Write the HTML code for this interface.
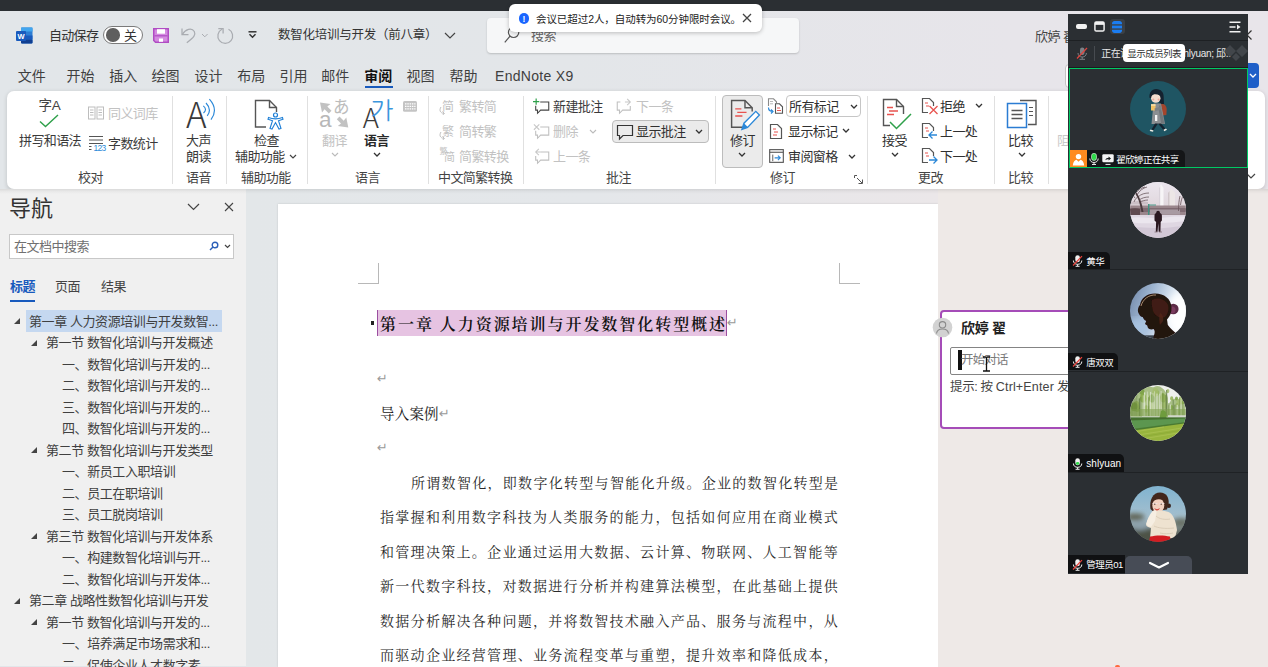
<!DOCTYPE html>
<html lang="zh-CN">
<head>
<meta charset="utf-8">
<title>数智化培训与开发</title>
<style>
*{box-sizing:border-box;margin:0;padding:0}
html,body{width:1268px;height:667px;overflow:hidden}
body{position:relative;background:linear-gradient(90deg,#e2e6e9 0%,#e3e6e9 45%,#e7e5ea 80%,#e8e5ea 100%);font-family:"Liberation Sans","Noto Sans CJK SC",sans-serif;color:#242424;font-size:13px}
.abs{position:absolute}
.t{position:absolute;white-space:nowrap;line-height:1}
.topbar{left:0;top:0;width:1268px;height:10.500px;background:#2b2f33}

/* ribbon */
.ribbon{left:7px;top:91.200px;width:1257.600px;height:97.500px;background:#fff;border-radius:7px;box-shadow:0 1.500px 4px rgba(0,0,0,.16)}
.sep{position:absolute;top:96px;width:1px;height:88px;background:#e0e0e0}
.rl{font-size:13px;color:#3a3a3a;letter-spacing:-0.6px}
.gl{font-size:13px;color:#444;letter-spacing:-0.6px}
.g{color:#c2c2c2 !important}
/* nav */
.nav{left:0;top:189px;width:246px;height:477px;background:#f0f0f0}
.tr{position:absolute;white-space:nowrap;line-height:1;font-size:13px;color:#404040;letter-spacing:-0.42px}
.tri{position:absolute;width:0;height:0;border-left:6px solid transparent;border-bottom:6px solid #444}
/* doc */
.docbg{left:246px;top:189px;width:692px;height:478px;background:linear-gradient(90deg,#e3e7e9 0%,#e4e7ea 50%,#ebe7e9 100%)}
.page{left:278px;top:204px;width:660px;height:463px;background:#fff;box-shadow:0 0 2px rgba(0,0,0,.15)}
.kai{font-family:"Liberation Serif","Noto Serif CJK SC",serif}
.body{position:absolute;white-space:nowrap;line-height:1;font-size:14px;color:#2a2a2a;letter-spacing:1.3px}
.pm{color:#9a9a9a;font-family:"DejaVu Sans",sans-serif}
/* right */
.right{left:938px;top:189px;width:330px;height:478px;background:#eee9e7}
/* video */
.vp{left:1068.300px;top:13.700px;width:179.700px;height:560.500px;background:#2b2f33}
.vl{position:absolute;height:17.500px;background:#101113;border-top-right-radius:5px;left:0}
.vt{position:absolute;white-space:nowrap;line-height:1;font-size:10px;color:#fff}
.av{position:absolute;left:62.200px;width:56px;height:56px;border-radius:50%;overflow:hidden}
</style>
</head>
<body>
<div class="abs topbar"></div>

<!-- TITLE BAR -->
<div id="titlebar">
<svg class="abs" style="left:16px;top:27px" width="17" height="17" viewBox="0 0 17 17">
  <rect x="5" y="0.5" width="11.5" height="16" rx="1.2" fill="#2b7cd3"/>
  <rect x="5" y="0.5" width="11.5" height="4" fill="#41a5ee"/>
  <rect x="5" y="8.5" width="11.5" height="4" fill="#185abd"/>
  <rect x="5" y="12.5" width="11.5" height="4" rx="1" fill="#103f91"/>
  <rect x="0" y="4" width="10" height="10" rx="1" fill="#185abd"/>
  <text x="5" y="11.8" font-size="7.5" font-weight="bold" fill="#fff" text-anchor="middle" font-family="Liberation Sans, sans-serif">W</text>
</svg>
<div class="t" style="left:49px;top:28.700px;font-size:13px;color:#333;letter-spacing:-0.7px">自动保存</div>
<div class="abs" style="left:103px;top:26px;width:39.500px;height:17.500px;border:1px solid #7a7a7a;border-radius:9px;background:#fff"></div>
<div class="abs" style="left:106px;top:28px;width:13.500px;height:13.500px;border-radius:50%;background:#5f5f5f"></div>
<div class="t" style="left:124px;top:28.700px;font-size:13px;color:#333">关</div>
<svg class="abs" style="left:153px;top:28px" width="16" height="15" viewBox="0 0 16 15">
  <path d="M0.750 0.750h14.500v13.500H2.500L0.750 12.500z" fill="#d48be0" stroke="#b04cc3" stroke-width="1.500"/>
  <rect x="4" y="1.200" width="8" height="4.500" fill="#fff"/>
  <rect x="6" y="10.500" width="4" height="3.300" fill="#fff"/>
  <path d="M1.500 7.800h13" stroke="#b04cc3" stroke-width="1.200"/>
</svg>
<svg class="abs" style="left:180px;top:26px" width="60" height="20" viewBox="0 0 60 20" fill="none" stroke="#a9acb1" stroke-width="1.250">
  <path d="M2 2.500v6.200h6.500"/><path d="M2.300 8.500c3-5.500 9.500-7.200 12-3 1.800 3.500-.5 6-7.500 11.200"/>
  <path d="M22 8l2.800 2.800L27.600 8" stroke-width="1"/>
  <path d="M42 3.300a7.400 7.400 0 1 0 6.500 0"/><path d="M38.300 2.600h4.800v4.800"/>
</svg>
<svg class="abs" style="left:247.500px;top:31px" width="9" height="8" viewBox="0 0 9 8" fill="none" stroke="#333" stroke-width="1.500"><path d="M0.500 0.800h8"/><path d="M1.500 3.300l3 3 3-3"/></svg>
<div class="t" style="left:278px;top:28.500px;font-size:12.500px;color:#333;letter-spacing:-0.25px">数智化培训与开发（前八章）</div>
<svg class="abs" style="left:444px;top:32px" width="12" height="8" viewBox="0 0 12 8" fill="none" stroke="#444" stroke-width="1.2"><path d="M1 1l5 5 5-5"/></svg>
<div class="abs" style="left:487px;top:18px;width:312px;height:35px;background:#f6f7f8;border-radius:4px;box-shadow:0 1px 2px rgba(0,0,0,.18)"></div>
<svg class="abs" style="left:504px;top:26px" width="16" height="17" viewBox="0 0 16 17" fill="none" stroke="#555" stroke-width="1.200"><circle cx="9.600" cy="6.300" r="5.200"/><path d="M6 10.200L0.800 16.300"/></svg>
<div class="t" style="left:531px;top:28.700px;font-size:13px;color:#666;letter-spacing:-0.4px">搜索</div>
<div class="t" style="left:1035px;top:29.700px;font-size:13px;color:#444;letter-spacing:-0.5px">欣婷 翟</div><div class="abs" style="left:1065px;top:64px;width:30px;height:24px;background:#fff;border-radius:4px;border:1px solid #c4c4c4"></div>
<!-- toast -->
<div class="abs" style="left:509px;top:3.800px;width:253px;height:28.400px;background:#fff;border-radius:6px;box-shadow:0 1px 4px rgba(0,0,0,.25)"></div>
<div class="abs" style="left:518.500px;top:13.200px;width:10.800px;height:10.800px;border-radius:50%;background:#1a66ff"></div>
<div class="t" style="left:522.600px;top:14.500px;font-size:8.500px;color:#fff;font-weight:bold">!</div>
<div class="t" style="left:536px;top:14px;font-size:10.500px;color:#222;letter-spacing:-0.07px">会议已超过2人，自动转为60分钟限时会议。</div>
<svg class="abs" style="left:742px;top:13px" width="10" height="10" viewBox="0 0 10 10" stroke="#444" stroke-width="1.3"><path d="M1 1l8 8M9 1l-8 8"/></svg>
<!-- far right window buttons -->
<svg class="abs" style="left:1242px;top:30px" width="10" height="10" viewBox="0 0 10 10" stroke="#333" stroke-width="1.200"><path d="M0.500 0.500l9 9M9.500 0.500l-9 9"/></svg>
<div class="abs" style="left:1240px;top:63px;width:19px;height:25px;background:#1f5fc8;border-radius:4px"></div>
<svg class="abs" style="left:1248.500px;top:73px" width="8" height="6" viewBox="0 0 8 6" fill="none" stroke="#fff" stroke-width="1.3"><path d="M1 1l3 3 3-3"/></svg>
</div>

<!-- MENU -->
<div id="menu">
<div class="t" style="left:17.8px;top:69px;font-size:14px;color:#3f3f3f">文件</div>
<div class="t" style="left:66.5px;top:69px;font-size:14px;color:#3f3f3f">开始</div>
<div class="t" style="left:109.2px;top:69px;font-size:14px;color:#3f3f3f">插入</div>
<div class="t" style="left:151.4px;top:69px;font-size:14px;color:#3f3f3f">绘图</div>
<div class="t" style="left:194.4px;top:69px;font-size:14px;color:#3f3f3f">设计</div>
<div class="t" style="left:237.2px;top:69px;font-size:14px;color:#3f3f3f">布局</div>
<div class="t" style="left:279.4px;top:69px;font-size:14px;color:#3f3f3f">引用</div>
<div class="t" style="left:321.3px;top:69px;font-size:14px;color:#3f3f3f">邮件</div>
<div class="t" style="left:364.2px;top:69px;font-size:14px;color:#111;font-weight:bold">审阅</div>
<div class="abs" style="left:365px;top:86px;width:27.500px;height:2px;background:#185abd"></div>
<div class="t" style="left:406.5px;top:69px;font-size:14px;color:#3f3f3f">视图</div>
<div class="t" style="left:449.5px;top:69px;font-size:14px;color:#3f3f3f">帮助</div>
<div class="t" style="left:495px;top:69px;font-size:14px;color:#3f3f3f;letter-spacing:0.3px">EndNote X9</div>
</div>

<!-- RIBBON -->
<div class="abs ribbon"></div>
<div id="ribbon-items">
<div class="sep" style="left:172px"></div>
<div class="sep" style="left:226px"></div>
<div class="sep" style="left:307px"></div>
<div class="sep" style="left:428px"></div>
<div class="sep" style="left:523px"></div>
<div class="sep" style="left:715px"></div>
<div class="sep" style="left:867px"></div>
<div class="sep" style="left:994px"></div>
<div class="sep" style="left:1048px"></div>
<!-- group labels -->
<div class="t gl" style="left:78px;top:171px">校对</div>
<div class="t gl" style="left:186px;top:171px">语音</div>
<div class="t gl" style="left:241px;top:171px">辅助功能</div>
<div class="t gl" style="left:355px;top:171px">语言</div>
<div class="t gl" style="left:438px;top:171px">中文简繁转换</div>
<div class="t gl" style="left:606px;top:171px">批注</div>
<div class="t gl" style="left:770px;top:171px">修订</div>
<div class="t gl" style="left:918px;top:171px">更改</div>
<div class="t gl" style="left:1008px;top:171px">比较</div>

<!-- 校对 -->
<div class="t" style="left:38.500px;top:99px;font-size:13.500px;color:#444;letter-spacing:-0.3px">字A</div>
<svg class="abs" style="left:39px;top:114px" width="20" height="14" viewBox="0 0 20 14" fill="none" stroke="#2ea04a" stroke-width="1.4"><path d="M1 7.5l5.5 5L19 1"/></svg>
<div class="t rl" style="left:19px;top:134px">拼写和语法</div>
<svg class="abs" style="left:88px;top:106px" width="16" height="14" viewBox="0 0 16 14" fill="none" stroke="#bdbdbd" stroke-width="1"><rect x="0.5" y="1" width="6.5" height="12"/><rect x="9" y="1" width="6.5" height="12"/><path d="M2 4h3.5M2 6.5h3.5M2 9h3.5M10.5 4H14M10.5 6.5H14M10.5 9H14"/></svg>
<div class="t rl g" style="left:108px;top:107px">同义词库</div>
<svg class="abs" style="left:88px;top:135px" width="17" height="16" viewBox="0 0 17 16" fill="none" stroke="#555" stroke-width="1"><path d="M1 1.5h14M1 5h14M1 8.5h14M1 11.5h2.5M1 14.5h2.5"/></svg>
<div class="t" style="left:93.500px;top:144px;font-size:8.500px;color:#2b8ad8;letter-spacing:-0.7px">123</div>
<div class="t rl" style="left:108px;top:137px">字数统计</div>

<!-- 语音 -->
<svg class="abs" style="left:184px;top:98px" width="34" height="32" viewBox="0 0 34 32" fill="none">
  <path d="M19.300 7.900Q23.600 11.500 19.500 15M22 5Q28.200 11.500 23.200 17.900M25.400 1.200Q34.600 11.500 27 21.700" stroke="#2b88d8" stroke-width="1.150"/>
</svg>
<div class="t" style="left:186px;top:95px;font-size:35px;font-weight:300;color:#3a3a3a;font-family:'Noto Sans CJK SC','Liberation Sans',sans-serif">A</div>
<div class="t rl" style="left:186px;top:134px">大声</div>
<div class="t rl" style="left:186px;top:150px">朗读</div>

<!-- 辅助功能 -->
<svg class="abs" style="left:253px;top:98px" width="34" height="34" viewBox="0 0 34 34" fill="none">
  <path d="M13 29H2.500V2.500h14l7 7V14" stroke="#555" stroke-width="1.4"/>
  <path d="M16.500 2.500v7h7" stroke="#555" stroke-width="1.4"/>
  <circle cx="22.500" cy="17" r="2" stroke="#1e7fd6" stroke-width="1.2"/>
  <path d="M15.500 19.500c4 1.600 10 1.600 14 0l.5 1.800c-2 .8-3.500 1.200-4.500 1.400l2.500 7.800-2 .6-3.500-6.500-3.500 6.500-2-.6 2.500-7.800c-1-.2-2.500-.6-4.500-1.400z" stroke="#1e7fd6" stroke-width="1.1"/>
</svg>
<div class="t rl" style="left:254px;top:134px">检查</div>
<div class="t rl" style="left:235px;top:150px">辅助功能</div>
<svg class="abs" style="left:289px;top:154px" width="8" height="6" viewBox="0 0 8 6" fill="none" stroke="#444" stroke-width="1.2"><path d="M1 1l3 3 3-3"/></svg>

<!-- 语言 -->
<svg class="abs" style="left:319px;top:98px" width="30" height="30" viewBox="0 0 30 30" fill="#c2c2c2">
  <path d="M1 4.500l10.500 1.500-3.200 2.600 4.200 4.200-2.700 2.700-4.200-4.200L3 14.500z"/>
  <path d="M29.300 29.500l-10.500-1.500 3.200-2.600-4.200-4.200 2.700-2.700 4.200 4.200L27.300 19.500z"/>
</svg>
<div class="t" style="left:333px;top:99px;font-size:16.500px;color:#bcbcbc;font-family:'Liberation Sans','Noto Sans CJK JP',sans-serif">あ</div>
<div class="t" style="left:319px;top:109.300px;font-size:22.500px;color:#b8b8b8">a</div>
<div class="t rl g" style="left:322px;top:134px">翻译</div>
<svg class="abs" style="left:331px;top:152px" width="8" height="6" viewBox="0 0 8 6" fill="none" stroke="#bbb" stroke-width="1.1"><path d="M1 1l3 3 3-3"/></svg>
<div class="t" style="left:362.700px;top:102.700px;font-size:27.500px;font-weight:300;color:#3a3a3a;font-family:'Noto Sans CJK SC','Liberation Sans',sans-serif">A</div>
<div class="t" style="left:370.500px;top:98.500px;font-size:24px;color:#3a96dd;font-family:'Liberation Sans','NanumGothic','Noto Sans CJK KR',sans-serif">가</div>
<div class="t rl" style="left:364px;top:134px;font-weight:bold;color:#2a2a2a">语言</div>
<svg class="abs" style="left:373px;top:152px" width="8" height="6" viewBox="0 0 8 6" fill="none" stroke="#333" stroke-width="1.3"><path d="M1 1l3 3 3-3"/></svg>
<svg class="abs" style="left:403px;top:101.300px" width="14" height="11" viewBox="0 0 14 11"><rect x="0" y="0" width="14" height="10.700" rx="1.500" fill="#c4c4c4"/><path d="M2 2.800h10.500M2 5.300h10.500M2 7.900h10.500" stroke="#fff" stroke-width="1.200" stroke-dasharray="1.500 0.800"/></svg>

<!-- 中文简繁转换 -->
<div class="t g" style="left:442px;top:100.500px;font-size:12px">简</div>
<div class="t rl g" style="left:459px;top:100px">繁转简</div>
<div class="t g" style="left:442px;top:125.500px;font-size:12px">繁</div>
<div class="t rl g" style="left:459px;top:125px">简转繁</div>
<div class="t g" style="left:444px;top:152px;font-size:11px">简</div>
<div class="t g" style="left:439.500px;top:147.500px;font-size:8px">繁</div>
<div class="t rl g" style="left:459px;top:150px">简繁转换</div>
<svg class="abs" style="left:438.500px;top:107px" width="8" height="8" viewBox="0 0 8 8" fill="none" stroke="#c0c0c0" stroke-width="1"><path d="M2 0c-2 3-1 6 3 6.500M3.500 4.500l2 2-2 1.500"/></svg>
<svg class="abs" style="left:438.500px;top:132px" width="8" height="8" viewBox="0 0 8 8" fill="none" stroke="#c0c0c0" stroke-width="1"><path d="M2 0c-2 3-1 6 3 6.500M3.500 4.500l2 2-2 1.500"/></svg>

<!-- 批注 -->
<svg class="abs" style="left:533px;top:98px" width="18" height="18" viewBox="0 0 20 20" fill="none"><path d="M8 4.500h9.500v9H8.500l-3.500 3.500v-3.500H3V8.500" stroke="#444" stroke-width="1.2"/><path d="M3.500 0.500v7M0 4h7" stroke="#2ea04a" stroke-width="1.3"/></svg>
<div class="t rl" style="left:553px;top:100px">新建批注</div>
<svg class="abs" style="left:533px;top:123px" width="18" height="18" viewBox="0 0 20 20" fill="none"><path d="M8 4.500h9.500v9H8.500l-3.500 3.500v-3.500H3V8.500" stroke="#c0c0c0" stroke-width="1.2"/><path d="M1 1.500l6 6M7 1.500l-6 6" stroke="#c8c8c8" stroke-width="1.2"/></svg>
<div class="t rl g" style="left:553px;top:125px">删除</div>
<svg class="abs" style="left:589px;top:129px" width="8" height="6" viewBox="0 0 8 6" fill="none" stroke="#bbb" stroke-width="1.1"><path d="M1 1l3 3 3-3"/></svg>
<svg class="abs" style="left:533px;top:148px" width="18" height="18" viewBox="0 0 20 20" fill="none"><path d="M8 4.500h9.500v9H8.500l-3.500 3.500v-3.500H3V9" stroke="#c0c0c0" stroke-width="1.2"/><path d="M6.500 1L3 4.500 6.500 8M3 4.500h5" stroke="#c8c8c8" stroke-width="1.2"/></svg>
<div class="t rl g" style="left:553px;top:150px">上一条</div>
<svg class="abs" style="left:615px;top:98px" width="18" height="18" viewBox="0 0 20 20" fill="none"><path d="M6 4.500H2.500v9H5v3.500l3.500-3.500H17V9" stroke="#c0c0c0" stroke-width="1.2"/><path d="M13.500 1L17 4.500 13.500 8M17 4.500h-6" stroke="#c8c8c8" stroke-width="1.2"/></svg>
<div class="t rl g" style="left:636px;top:100px">下一条</div>
<div class="abs" style="left:612px;top:120px;width:97px;height:23px;background:#ebebeb;border:1px solid #bcbcbc;border-radius:4px"></div>
<svg class="abs" style="left:616px;top:123px" width="18" height="18" viewBox="0 0 18 18" fill="none"><path d="M1.500 2.500h15v10H7l-3.500 3.500v-3.500H1.500z" stroke="#333" stroke-width="1.200"/></svg>
<div class="t rl" style="left:636px;top:125px;color:#303030">显示批注</div>
<svg class="abs" style="left:695px;top:129px" width="8" height="6" viewBox="0 0 8 6" fill="none" stroke="#333" stroke-width="1.3"><path d="M1 1l3 3 3-3"/></svg>

<!-- 修订 -->
<div class="abs" style="left:722px;top:95px;width:41px;height:73px;background:#ebebeb;border:1px solid #bcbcbc;border-radius:4px"></div>
<svg class="abs" style="left:729px;top:97.500px" width="33" height="35" viewBox="0 0 32 34" fill="none">
  <path d="M17 28.500H2.500V2.500h13l7 7V13" stroke="#555" stroke-width="1.4"/><path d="M15.500 2.500v7h7" stroke="#555" stroke-width="1.4"/>
  <path d="M6 10.500h6M8 14h9M6 17.500h7" stroke="#e8534f" stroke-width="1.300"/>
  <path d="M12.500 30.500l2-6L26 13l3.500 3.500L18 28.500z" fill="#fff" stroke="#2b88d8" stroke-width="1.300"/><path d="M12.500 30.500l2-6 4 4z" fill="#2b88d8"/>
</svg>
<div class="t rl" style="left:730px;top:134px;color:#303030">修订</div>
<svg class="abs" style="left:738px;top:152px" width="8" height="6" viewBox="0 0 8 6" fill="none" stroke="#333" stroke-width="1.3"><path d="M1 1l3 3 3-3"/></svg>
<svg class="abs" style="left:767px;top:98px" width="17" height="17" viewBox="0 0 17 17" fill="none">
  <path d="M1.500 8V0.800h5l3 3V5" stroke="#8a8a8a" stroke-width="1.100"/><path d="M3 3.500h3M3 5.800h3" stroke="#b0b0b0" stroke-width="0.900"/>
  <path d="M8.500 15.300v-9.500h4l3 3v6.500z" stroke="#555" stroke-width="1.100" fill="#fff"/><path d="M10 10h3M10 12.500h4" stroke="#e8534f" stroke-width="1"/>
  <path d="M1.500 9.500c0 3 1.500 4 4.500 4M4 11.500l2 2-2 2" stroke="#2b88d8" stroke-width="1.200"/>
</svg>
<div class="abs" style="left:786px;top:95.300px;width:75px;height:22px;background:#fff;border:1px solid #c6c6c6;border-radius:4px"></div>
<div class="t rl" style="left:789px;top:100px;color:#303030">所有标记</div>
<svg class="abs" style="left:850px;top:104px" width="8" height="6" viewBox="0 0 8 6" fill="none" stroke="#333" stroke-width="1.3"><path d="M1 1l3 3 3-3"/></svg>
<svg class="abs" style="left:769px;top:123px" width="14" height="17" viewBox="0 0 14 17" fill="none"><path d="M1.500 15.500v-14h7l4 4v10z" stroke="#555" stroke-width="1.200"/><path d="M4 6h3M5 9h4M4 12h4" stroke="#e8534f" stroke-width="1.100"/></svg>
<div class="t rl" style="left:788px;top:125px;color:#303030">显示标记</div>
<svg class="abs" style="left:842px;top:128px" width="8" height="6" viewBox="0 0 8 6" fill="none" stroke="#333" stroke-width="1.3"><path d="M1 1l3 3 3-3"/></svg>
<svg class="abs" style="left:769px;top:149px" width="15" height="14" viewBox="0 0 16 15" fill="none"><rect x="0.700" y="0.700" width="14.600" height="13.600" stroke="#555" stroke-width="1.200"/><path d="M0.700 3.500h14.600" stroke="#555" stroke-width="1.200"/><path d="M4 6v7" stroke="#555" stroke-width="1"/><path d="M6 9.500h6M9.500 7l2.500 2.500-2.500 2.500" stroke="#2b88d8" stroke-width="1.200"/></svg>
<div class="t rl" style="left:788px;top:150px;color:#303030">审阅窗格</div>
<svg class="abs" style="left:848px;top:154px" width="8" height="6" viewBox="0 0 8 6" fill="none" stroke="#333" stroke-width="1.3"><path d="M1 1l3 3 3-3"/></svg>
<svg class="abs" style="left:854px;top:175px" width="9" height="9" viewBox="0 0 9 9" fill="none" stroke="#555" stroke-width="1"><path d="M0.500 3V0.500H3M8.500 4.500v4h-4M3 3l5 5"/></svg>

<!-- 更改 -->
<svg class="abs" style="left:881px;top:97px" width="32" height="36" viewBox="0 0 32 36" fill="none">
  <path d="M9 28.500H2.500V2.500h13l7 7V17" stroke="#555" stroke-width="1.4"/><path d="M15.500 2.500v7h7" stroke="#555" stroke-width="1.4"/>
  <path d="M6 10.500h6M8 14h9M6 17.500h7" stroke="#e8534f" stroke-width="1.300"/>
  <path d="M9 25l6.500 6.500L30 17" stroke="#2ea04a" stroke-width="1.500"/>
</svg>
<div class="t rl" style="left:882px;top:134px;color:#303030">接受</div>
<svg class="abs" style="left:891px;top:152px" width="8" height="6" viewBox="0 0 8 6" fill="none" stroke="#333" stroke-width="1.3"><path d="M1 1l3 3 3-3"/></svg>
<svg class="abs" style="left:921px;top:97px" width="18" height="18" viewBox="0 0 18 18" fill="none"><path d="M7 15.500H1.500v-14h7l4 4V9" stroke="#555" stroke-width="1.200"/><path d="M4 6h3M5 9h3" stroke="#e8534f" stroke-width="1.100"/><path d="M8.500 9l8 8M16.500 9l-8 8" stroke="#e8534f" stroke-width="1.300"/></svg>
<div class="t rl" style="left:940px;top:100px;color:#303030">拒绝</div>
<svg class="abs" style="left:975px;top:103px" width="8" height="6" viewBox="0 0 8 6" fill="none" stroke="#333" stroke-width="1.3"><path d="M1 1l3 3 3-3"/></svg>
<svg class="abs" style="left:921px;top:122px" width="18" height="18" viewBox="0 0 18 18" fill="none"><path d="M7 15.500H1.500v-14h7l4 4V9" stroke="#555" stroke-width="1.200"/><path d="M4 6h3M5 9h3" stroke="#e8534f" stroke-width="1.100"/><path d="M16 13H8.500M11.500 9.500L8 13l3.500 3.500" stroke="#2b88d8" stroke-width="1.300"/></svg>
<div class="t rl" style="left:940px;top:125px;color:#303030">上一处</div>
<svg class="abs" style="left:921px;top:147px" width="18" height="18" viewBox="0 0 18 18" fill="none"><path d="M7 15.500H1.500v-14h7l4 4V9" stroke="#555" stroke-width="1.200"/><path d="M4 6h3M5 9h3" stroke="#e8534f" stroke-width="1.100"/><path d="M8 13h7.500M12.500 9.500L16 13l-3.500 3.500" stroke="#2b88d8" stroke-width="1.300"/></svg>
<div class="t rl" style="left:940px;top:150px;color:#303030">下一处</div>

<!-- 比较 -->
<svg class="abs" style="left:1005px;top:97px" width="34" height="32" viewBox="0 0 34 32" fill="none">
  <path d="M15 3.500h16v24h-8" stroke="#555" stroke-width="1.400"/><path d="M24 10.500h4M24 14.500h4M24 18.500h4" stroke="#555" stroke-width="1.200"/>
  <rect x="2.500" y="6.500" width="19" height="24" fill="#fff" stroke="#2b7cd3" stroke-width="1.500"/>
  <path d="M6.500 13.500h11M6.500 17.500h11M6.500 21.500h11" stroke="#555" stroke-width="1.300"/>
</svg>
<div class="t rl" style="left:1008px;top:134px;color:#303030">比较</div>
<svg class="abs" style="left:1018px;top:152px" width="8" height="6" viewBox="0 0 8 6" fill="none" stroke="#333" stroke-width="1.3"><path d="M1 1l3 3 3-3"/></svg>
<div class="t rl" style="left:1057px;top:134px;color:#c8c8c8">阻</div>
<svg class="abs" style="left:1246px;top:173px" width="10" height="7" viewBox="0 0 10 7" fill="none" stroke="#444" stroke-width="1.200"><path d="M1 1l4 4 4-4"/></svg>
</div>


<!-- NAV -->
<div class="abs nav"></div>
<div id="nav-items">
<div class="t" style="left:9px;top:198px;font-size:22px;color:#333;letter-spacing:0px">导航</div>
<svg class="abs" style="left:187px;top:203px" width="13" height="8" viewBox="0 0 13 8" fill="none" stroke="#444" stroke-width="1.2"><path d="M1 1l5.500 5.500L12 1"/></svg>
<svg class="abs" style="left:223.800px;top:202.300px" width="10" height="10" viewBox="0 0 10 10" stroke="#444" stroke-width="1.100"><path d="M1 1l8 8M9 1l-8 8"/></svg>
<div class="abs" style="left:9px;top:234px;width:225px;height:25px;background:#fff;border:1px solid #c8c8c8"></div>
<div class="t" style="left:14px;top:240px;font-size:13px;color:#707070;letter-spacing:-0.5px">在文档中搜索</div>
<svg class="abs" style="left:209px;top:241px" width="10" height="10" viewBox="0 0 10 10" fill="none" stroke="#2b5fb8" stroke-width="1.4"><circle cx="6" cy="4" r="2.800"/><path d="M4 6L1 9"/></svg>
<svg class="abs" style="left:224px;top:244px" width="7" height="5" viewBox="0 0 7 5" fill="none" stroke="#444" stroke-width="1.200"><path d="M1 1l2.500 2.500L6 1"/></svg>
<div class="t" style="left:10px;top:280px;font-size:13px;color:#185abd;font-weight:bold;letter-spacing:-0.5px">标题</div>
<div class="abs" style="left:10px;top:300px;width:25px;height:2px;background:#185abd"></div>
<div class="t" style="left:55px;top:280px;font-size:13px;color:#444;letter-spacing:-0.5px">页面</div>
<div class="t" style="left:101px;top:280px;font-size:13px;color:#444;letter-spacing:-0.5px">结果</div>
<div class="abs" style="left:25.500px;top:310.300px;width:196.500px;height:21.300px;background:#c5d8f0"></div>
<div class="tr" style="left:29px;top:314.5px">第一章 人力资源培训与开发数智...</div>
<div class="tri" style="left:14px;top:318.0px"></div>
<div class="tr" style="left:46px;top:336.0px">第一节 数智化培训与开发概述</div>
<div class="tri" style="left:31px;top:339.5px"></div>
<div class="tr" style="left:62px;top:357.5px">一、数智化培训与开发的...</div>
<div class="tr" style="left:62px;top:379.0px">二、数智化培训与开发的...</div>
<div class="tr" style="left:62px;top:400.5px">三、数智化培训与开发的...</div>
<div class="tr" style="left:62px;top:422.0px">四、数智化培训与开发的...</div>
<div class="tr" style="left:46px;top:443.5px">第二节 数智化培训与开发类型</div>
<div class="tri" style="left:31px;top:447.0px"></div>
<div class="tr" style="left:62px;top:465.0px">一、新员工入职培训</div>
<div class="tr" style="left:62px;top:486.5px">二、员工在职培训</div>
<div class="tr" style="left:62px;top:508.0px">三、员工脱岗培训</div>
<div class="tr" style="left:46px;top:529.5px">第三节 数智化培训与开发体系</div>
<div class="tri" style="left:31px;top:533.0px"></div>
<div class="tr" style="left:62px;top:551.0px">一、构建数智化培训与开...</div>
<div class="tr" style="left:62px;top:572.5px">二、数智化培训与开发体...</div>
<div class="tr" style="left:29px;top:594.0px">第二章 战略性数智化培训与开发</div>
<div class="tri" style="left:14px;top:597.5px"></div>
<div class="tr" style="left:46px;top:615.5px">第一节 数智化培训与开发的...</div>
<div class="tri" style="left:31px;top:619.0px"></div>
<div class="tr" style="left:62px;top:637.0px">一、培养满足市场需求和...</div>
<div class="tr" style="left:62px;top:658.5px">二、促使企业人才数字素...</div>
</div>

<!-- DOC -->
<div class="abs docbg"></div>
<div class="abs page"></div>
<div id="doc-items">
<div class="abs" style="left:358px;top:283px;width:21px;height:1px;background:#b8b8b8"></div>
<div class="abs" style="left:378px;top:263px;width:1px;height:21px;background:#b8b8b8"></div>
<div class="abs" style="left:839px;top:283px;width:21px;height:1px;background:#b8b8b8"></div>
<div class="abs" style="left:839px;top:263px;width:1px;height:21px;background:#b8b8b8"></div>
<div class="abs" style="left:370.800px;top:321px;width:3.400px;height:3.600px;background:#222"></div>
<div class="abs" style="left:377px;top:310px;width:350px;height:26px;background:#e6c3e2;border-left:1.500px solid #9b4fa0;border-right:1px solid #9b4fa0"></div>
<div class="t kai" id="h1" style="left:380px;top:316.500px;font-size:16px;font-weight:600;color:#111;letter-spacing:1.95px">第一章 人力资源培训与开发数智化转型概述</div>
<div class="t pm" style="left:727px;top:316px;font-size:13px">↵</div>
<div class="t pm" style="left:377px;top:372px;font-size:13px">↵</div>
<div class="t kai" style="left:380px;top:407px;font-size:14.5px;color:#1a1a1a;letter-spacing:0.2px">导入案例</div>
<div class="t pm" style="left:439px;top:407px;font-size:13px">↵</div>
<div class="t pm" style="left:377px;top:441px;font-size:13px">↵</div>
<div class="body kai" style="left:411px;top:477.0px">所谓数智化，即数字化转型与智能化升级。企业的数智化转型是</div>
<div class="body kai" style="left:380px;top:511.4px">指掌握和利用数字科技为人类服务的能力，包括如何应用在商业模式</div>
<div class="body kai" style="left:380px;top:545.8px">和管理决策上。企业通过运用大数据、云计算、物联网、人工智能等</div>
<div class="body kai" style="left:380px;top:580.2px">新一代数字科技，对数据进行分析并构建算法模型，在此基础上提供</div>
<div class="body kai" style="left:380px;top:614.6px">数据分析解决各种问题，并将数智技术融入产品、服务与流程中，从</div>
<div class="body kai" style="left:380px;top:649.0px">而驱动企业经营管理、业务流程变革与重塑，提升效率和降低成本，</div>
</div>

<!-- RIGHT -->
<div class="abs right"></div>
<div id="right-items">
<div class="abs" style="left:940px;top:310px;width:160px;height:119px;background:#fff;border:2px solid #a54cb8;border-radius:4px"></div>
<svg class="abs" style="left:932px;top:317px" width="21" height="21" viewBox="0 0 21 21"><circle cx="10.500" cy="10.500" r="9.800" fill="#d2d2d2"/><circle cx="10.500" cy="7.800" r="3.200" fill="none" stroke="#8a8a8a" stroke-width="1.100"/><path d="M4.500 16.500c.5-3.500 3-4.500 6-4.500s5.500 1 6 4.500" fill="none" stroke="#8a8a8a" stroke-width="1.100"/></svg>
<div class="t" style="left:961px;top:321px;font-size:14px;font-weight:bold;color:#222;letter-spacing:-0.3px">欣婷 翟</div>
<div class="abs" style="left:949.500px;top:346.500px;width:140px;height:28px;background:#fff;border:1.400px solid #848484;border-radius:2px"></div>
<div class="abs" style="left:958px;top:350px;width:4px;height:20px;background:#111"></div>
<div class="t" style="left:961px;top:354px;font-size:12.500px;color:#7a7a7a;letter-spacing:-0.8px">开始对话</div>
<svg class="abs" style="left:982px;top:356px" width="9" height="16" viewBox="0 0 9 16" fill="none" stroke="#111" stroke-width="1.300"><path d="M1 1h2.500c.7 0 1 .5 1 1v12c0 .5.300 1 1 1H8M8 1H5.500c-.7 0-1 .5-1 1M1 15h2.500c.7 0 1-.5 1-1"/></svg>
<div class="t" style="left:950px;top:381px;font-size:12.500px;color:#444;letter-spacing:-0.35px">提示: 按 <span style="letter-spacing:0.150px">Ctrl+Enter</span> 发送</div>
<div class="abs" style="left:1114.500px;top:665.300px;width:5.500px;height:2px;background:#ff6a3d;border-radius:3px 3px 0 0"></div>
</div>

<div class="abs" style="left:0;top:188.700px;width:1268px;height:5px;background:linear-gradient(180deg,rgba(0,0,0,.09),rgba(0,0,0,.03) 50%,rgba(0,0,0,0))"></div>
<!-- VIDEO PANEL -->
<div class="abs vp" id="vp">
<div class="abs" style="left:0;top:26px;width:180px;height:1px;background:#1d2023"></div>
<div class="abs" style="left:8px;top:10.500px;width:10.500px;height:4.500px;border-radius:2px;background:#f2f2f2"></div>
<svg class="abs" style="left:25.500px;top:7.300px" width="11" height="11" viewBox="0 0 12 12"><rect x="1" y="1" width="10" height="10" rx="1.500" fill="none" stroke="#f2f2f2" stroke-width="1.600"/><rect x="1" y="1" width="10" height="3.200" fill="#f2f2f2"/></svg>
<div class="abs" style="left:41.500px;top:5px;width:15px;height:15px;border-radius:3px;background:#3b4046"></div>
<svg class="abs" style="left:44px;top:7px" width="10" height="12" viewBox="0 0 10 12" fill="#1b7df2"><path d="M0 3.200V2.500C0 1.100 1.100 0 2.500 0h5C8.900 0 10 1.100 10 2.500v.7z"/><rect x="0" y="4.600" width="10" height="2.800"/><path d="M0 8.800h10v.7C10 10.900 8.900 12 7.500 12h-5C1.100 12 0 10.900 0 9.500z"/></svg>
<svg class="abs" style="left:160.500px;top:7px" width="12" height="12" viewBox="0 0 12 12" fill="none" stroke="#f2f2f2" stroke-width="1.500"><path d="M0.500 1.200h11M0.500 6h6M0.500 10.800h11"/><path d="M8 3.500L11.500 6 8 8.500z" fill="#f2f2f2" stroke="none"/></svg>
<svg class="abs" style="left:8px;top:33px" width="12" height="13" viewBox="0 0 12 13"><rect x="4" y="0.500" width="4.500" height="7.500" rx="2.200" fill="#7d8186"/><path d="M2 6c0 2.500 1.800 4 4.200 4s4.200-1.500 4.200-4M6.200 10v2M3.500 12.300h5.500" fill="none" stroke="#7d8186" stroke-width="1"/><path d="M1 11.500L11 1" stroke="#e0443e" stroke-width="1.200"/></svg>
<div class="abs" style="left:26px;top:32px;width:1px;height:15px;background:#474b50"></div>
<div class="vt" style="left:33px;top:35px;font-size:10px;color:#e8e8e8;letter-spacing:-0.5px">正在讲话:</div><div class="vt" style="left:110.500px;top:35px;font-size:10px;color:#e8e8e8;letter-spacing:-0.3px">shlyuan; 邱..</div>
<svg class="abs" style="left:156px;top:31px" width="24" height="16" viewBox="0 0 24 16" fill="#45494e"><path d="M6 0l6 6-6 6-6-6zM18 0l6 6-6 6-6-6zM12 8l4 4-4 4-4-4z" opacity="0.900"/></svg>
<div class="abs" style="left:54.500px;top:30.500px;width:62.500px;height:18px;border-radius:4px;background:#fff"></div>
<div class="vt" style="left:59px;top:35px;font-size:9.500px;color:#333;letter-spacing:-0.55px">显示成员列表</div>
<div class="abs" style="left:0;top:255.7px;width:180px;height:1px;background:#1f2225"></div>
<div class="abs" style="left:0;top:356.9px;width:180px;height:1px;background:#1f2225"></div>
<div class="abs" style="left:0;top:458.1px;width:180px;height:1px;background:#1f2225"></div>
<div class="abs" style="left:0;top:53px;width:180px;height:1.200px;background:#1c1a1d"></div><div class="abs" style="left:0.700px;top:54.200px;width:178.600px;height:100px;border:1.600px solid #00c864"></div>
<div class="abs" style="left:2px;top:136px;width:17px;height:17px;background:#ff8a1f"></div>
<svg class="abs" style="left:4px;top:139px" width="13" height="13" viewBox="0 0 13 13" fill="#fff"><circle cx="6.500" cy="3.600" r="2.700"/><path d="M0.800 12.500c.3-3.500 2.200-5.500 3.700-5.700l2 2 2-2c1.500.2 3.400 2.200 3.700 5.700z"/></svg>
<div class="abs" style="left:19px;top:136px;width:98px;height:17px;background:#141618;border-top-right-radius:5px"></div>
<svg class="abs" style="left:21px;top:139px" width="10" height="12" viewBox="0 0 10 12"><rect x="2.500" y="0.300" width="5" height="7.200" rx="2.500" fill="#2fdc4a" stroke="#e8e8e8" stroke-width="0.600"/><path d="M0.800 5.500c0 2.500 1.800 4 4.200 4s4.200-1.500 4.200-4M5 9.500v1.800M3 11.500h4" fill="none" stroke="#e8e8e8" stroke-width="1"/></svg>
<svg class="abs" style="left:34px;top:140px" width="12" height="11" viewBox="0 0 12 11"><rect x="0.300" y="0.300" width="11.400" height="8" rx="1.200" fill="#f4f4f4"/><path d="M3.500 10.400h5" stroke="#f4f4f4" stroke-width="1"/><path d="M3.300 6.200c.5-1.800 1.800-2.500 3.300-2.500V2.500L9 4.500 6.600 6.400V5.200c-1.400 0-2.400.3-3.300 1z" fill="#141618"/></svg>
<div class="vt" style="left:48px;top:141px;font-size:9.500px;letter-spacing:-0.6px">翟欣婷正在共享</div>
<div class="vl" style="top:238.1px;width:42px"></div>
<svg class="abs" style="left:4px;top:241.5px" width="11" height="12" viewBox="0 0 11 12"><rect x="3.300" y="0.300" width="4.600" height="7" rx="2.300" fill="#f0f0f0"/><path d="M1.400 5.500c0 2.400 1.700 3.800 4.200 3.800s4.200-1.400 4.200-3.800M5.600 9.300v1.700M3.600 11.300h4" fill="none" stroke="#f0f0f0" stroke-width="1"/><path d="M1 10.500L10 1.200" stroke="#e8403a" stroke-width="1.200"/></svg>
<div class="vt" style="left:18px;top:242.9px;font-size:9.500px;letter-spacing:-0.55px">黄华</div>
<div class="vl" style="top:339.3px;width:50px"></div>
<svg class="abs" style="left:4px;top:342.7px" width="11" height="12" viewBox="0 0 11 12"><rect x="3.300" y="0.300" width="4.600" height="7" rx="2.300" fill="#f0f0f0"/><path d="M1.400 5.500c0 2.400 1.700 3.800 4.200 3.800s4.200-1.400 4.200-3.800M5.600 9.300v1.700M3.600 11.300h4" fill="none" stroke="#f0f0f0" stroke-width="1"/><path d="M1 10.500L10 1.200" stroke="#e8403a" stroke-width="1.200"/></svg>
<div class="vt" style="left:18px;top:344.1px;font-size:9.500px;letter-spacing:-0.55px">唐双双</div>
<div class="vl" style="top:440.5px;width:56px"></div>
<svg class="abs" style="left:4px;top:443.9px" width="11" height="12" viewBox="0 0 11 12"><rect x="3.300" y="0.300" width="4.600" height="7" rx="2.300" fill="#f0f0f0"/><rect x="3.900" y="4" width="3.400" height="2.800" rx="1.400" fill="#2fdc4a"/><path d="M1.400 5.500c0 2.400 1.700 3.800 4.200 3.800s4.200-1.400 4.200-3.800M5.600 9.300v1.700M3.600 11.300h4" fill="none" stroke="#f0f0f0" stroke-width="1"/></svg>
<div class="vt" style="left:18px;top:445.3px;font-size:10px;letter-spacing:0.050px">shlyuan</div>
<div class="vl" style="top:541.7px;width:56.500px;border-radius:0"></div>
<svg class="abs" style="left:4px;top:545.1px" width="11" height="12" viewBox="0 0 11 12"><rect x="3.300" y="0.300" width="4.600" height="7" rx="2.300" fill="#f0f0f0"/><path d="M1.400 5.500c0 2.400 1.700 3.800 4.200 3.800s4.200-1.400 4.200-3.800M5.600 9.300v1.700M3.600 11.300h4" fill="none" stroke="#f0f0f0" stroke-width="1"/><path d="M1 10.500L10 1.200" stroke="#e8403a" stroke-width="1.200"/></svg>
<div class="vt" style="left:18px;top:546.5px;font-size:9.500px;letter-spacing:-0.55px">管理员01</div>
<div class="abs" style="left:56.500px;top:542.700px;width:67px;height:18px;background:#474c56;border-radius:5px 5px 0 0"></div>
<svg class="abs" style="left:80px;top:547px" width="22" height="9" viewBox="0 0 22 9" fill="none" stroke="#fff" stroke-width="2.200" stroke-linecap="round" stroke-linejoin="round"><path d="M2 2l9 4.500L20 2"/></svg>
<div class="av" id="av1" style="top:67.0px"><svg width="56" height="56" viewBox="0 0 56 56"><rect width="56" height="56" fill="#1f5563"/>
<path d="M19.600 17c-.8-5 2-9 6.500-9 5 0 7.800 3.500 7.600 8.500l.3 6.500h-4.500v-5z" fill="#15222f"/>
<ellipse cx="25.800" cy="17.300" rx="4.700" ry="4.500" fill="#f4ddce"/>
<path d="M20.800 14.800c2-1.800 5.500-2.200 9.500-.3l-.3-3.500-6-1.500-3.500 2.500z" fill="#15222f"/>
<circle cx="23.300" cy="18.600" r="1" fill="#f0a89a"/><circle cx="28.600" cy="18.600" r="1" fill="#f0a89a"/>
<path d="M30.500 23.500c3-1.200 5.800.5 6.200 4.500l-.3 6-4.500.5z" fill="#a3452c"/>
<path d="M23.500 22.500h7.500l4 20.500H21.500z" fill="#8b8f92"/>
<path d="M30 23l4.500 19.800h-3.300L28.500 28z" fill="#72777b"/>
<rect x="25" y="34" width="2.300" height="6" fill="#f5f5f5"/>
<rect x="21" y="23.300" width="4.500" height="6.300" rx="0.600" fill="#f0c266"/>
<path d="M21 23.300h4.500v1.500H21z" fill="#f7e3b0"/>
<path d="M24.500 27.500l6.500-2 .8 2.500-6.800 2.500z" fill="#7d8285"/>
<path d="M25 42.500h3l-4.500 6.800-2-.8z" fill="#15222f"/><path d="M28 42.500h3l4.500 5.300-1.800 1.400z" fill="#15222f"/>
<path d="M20.500 48.500l3 1-.5 1.300-3.300-.8z" fill="#f2efe6"/><path d="M33.500 48.800l2.500-1.300 1 1.300-2.800 1.500z" fill="#f2efe6"/>
</svg></div>
<div class="av" id="av2" style="top:168.5px"><svg width="56" height="56" viewBox="0 0 56 56"><defs><filter id="b2"><feGaussianBlur stdDeviation="0.700"/></filter><linearGradient id="sky2" x1="0" y1="0" x2="0" y2="1"><stop offset="0" stop-color="#ebe6ee"/><stop offset="1" stop-color="#e0d6dc"/></linearGradient></defs>
<rect width="56" height="56" fill="#ddd5e0"/><rect width="56" height="26" fill="url(#sky2)"/>
<g filter="url(#b2)">
<path d="M29 25V6l2-4 2.500 4v19z" fill="#f7f5f7"/><path d="M29 25V6l1.200-2v21z" fill="#d9d2da"/>
<path d="M38 24.500V11l3.500-4.500L45 11v13.500z" fill="#ece6e6"/><path d="M38 24.500V11l1.500-2v15.500z" fill="#d0c6ca"/>
<rect x="0" y="23.500" width="56" height="9.500" fill="#9a868c"/>
<rect x="0" y="26" width="56" height="4" fill="#7f6a72"/>
<rect x="20" y="27.500" width="30" height="5" fill="#a89aa2"/>
<path d="M1 20l10-1.500 7 1.500v2.500H1z" fill="#cbbfc6"/>
<path d="M5 9c3 3 5.500 8 7 14l1.500 7h-2L10 23C8.500 17 6.500 13 4 10z" fill="#4a3a3e"/>
<path d="M6 11c2-3 5-5 9-6M8 15c3-3 7-4 11-4M3 14c-1-3 0-6 2-8M7 13c2-4 6-7 10-8M9 18c3-2 6-3 10-3M5 16c-2-2-3-5-2-8M10 20c2-1 5-2 8-2M4 20c1-3 3-5 5-6" stroke="#5a484e" stroke-width="0.700" fill="none"/><path d="M0 27c3-1 7-1 10 0v6H0z" fill="#5e4a50"/>
<path d="M50 14c-1 4-1.500 9-1.500 15M54 12c-2 3-3 7-3.500 11" stroke="#6a565c" stroke-width="0.800" fill="none"/>
<rect x="18" y="22" width="1.400" height="15" fill="#3f8f80"/><path d="M18 22.500h8v1h-8z" fill="#4a9a8a"/>
<rect x="0" y="33" width="56" height="23" fill="#dfd7e2"/>
<path d="M0 36c10-2 20 1 30 0s18-2 26-1v4c-10 1-18 2-28 2s-18 1-28-1z" fill="#ebe6ee"/>
<path d="M0 46c12-2 22 1 34 0s14-2 22-1v11H0z" fill="#d2c8d6"/>
</g>
<path d="M26.200 31c0-1.400.8-2.200 1.900-2.200s1.900.8 1.900 2.200c1.300.4 1.900 1.300 1.900 2.800v4.700l-1.200 1.500-.3 9.800h-1.700l-.4-8.500-.8 8.500h-1.700l.3-9.800-1.600-1.500v-4.700c0-1.500.6-2.400 1.700-2.800z" fill="#2a1820"/><path d="M24.500 50h3M29 50h3" stroke="#6a5058" stroke-width="0.600"/>
</svg></div>
<div class="av" id="av3" style="top:269.8px"><svg width="56" height="56" viewBox="0 0 56 56"><defs><filter id="b3"><feGaussianBlur stdDeviation="0.600"/></filter><filter id="b3b"><feGaussianBlur stdDeviation="3.500"/></filter>
<linearGradient id="g3" x1="0" y1="0" x2="1" y2="0.350"><stop offset="0" stop-color="#6d83a4"/><stop offset="0.400" stop-color="#9fb6d2"/><stop offset="0.800" stop-color="#e4edf6"/><stop offset="1" stop-color="#f6f9fc"/></linearGradient></defs>
<rect width="56" height="56" fill="url(#g3)"/>
<ellipse cx="49" cy="30" rx="12" ry="20" fill="#ffffff" opacity="0.900" filter="url(#b3b)"/>
<ellipse cx="8" cy="44" rx="14" ry="9" fill="#a9c4e2" opacity="0.900" filter="url(#b3b)"/>
<rect x="0" y="52.300" width="25" height="3.700" fill="#3b434d"/>
<g filter="url(#b3)">
<circle cx="43.300" cy="26" r="5.300" fill="#5b2a46"/>
<circle cx="42" cy="27" r="3.500" fill="#7a3a5e"/>
<path d="M9 31c-2-3-1-7 1-9 1-7 7-11.500 15-11.500 9 0 16 5 16.500 14 .2 5-1.500 9-4.500 12l.8 5.500c3 4 6 6.500 9 9L45 56H23l1.500-5.500c.5-2 0-3.500-1-4.500-2 .8-4.500.3-5.500-1l-.8-2.500-2.200-1.500 1.200-3c-2-1-3-2.500-3.500-4-2 0-3-1.500-3.700-3z" fill="#24120d"/>
<path d="M11 23c2-7 8-11.500 15-11" stroke="#e2c49a" stroke-width="0.800" fill="none" opacity="0.850"/>
<path d="M22 17c6-3 13-1 16 5 1 4 0 9-3 12-5 2-10-1-12-6-1-4-1.500-8-1-11z" fill="#4a2115" opacity="0.750"/>
<path d="M30 30c2 1 4 4 3 8l-3 4c-1-3-1-8 0-12z" fill="#5a2a1a" opacity="0.600"/>
</g></svg></div>
<div class="av" id="av4" style="top:371.1px"><svg width="56" height="56" viewBox="0 0 56 56"><defs><filter id="b4"><feGaussianBlur stdDeviation="0.450"/></filter></defs>
<rect width="56" height="56" fill="#eef0ec"/>
<g filter="url(#b4)">
<path d="M0 31V12c3-5 6-8 9-9 3 1 5-2 8-2 3 0 5 2 7 1 3-2 6-1 8 1 3 2 5 6 6 10v8c1-3 3-6 5-7 2 0 3-1 5 0 2 1 4 2 8 5v13z" fill="#a9bf86"/>
<ellipse cx="32.0" cy="12.2" rx="1.8" ry="2.5" fill="#93b255" opacity="0.85"/><ellipse cx="6.4" cy="4.3" rx="2.7" ry="3.8" fill="#8fae52" opacity="0.85"/><ellipse cx="37.9" cy="6.1" rx="1.5" ry="2.1" fill="#a4bd6c" opacity="0.85"/><ellipse cx="32.6" cy="9.8" rx="1.5" ry="2.1" fill="#8fae52" opacity="0.85"/><ellipse cx="16.4" cy="23.9" rx="2.5" ry="3.6" fill="#93b255" opacity="0.85"/><ellipse cx="26.8" cy="8.1" rx="2.1" ry="3.0" fill="#86a94a" opacity="0.85"/><ellipse cx="12.3" cy="12.3" rx="2.5" ry="3.6" fill="#a4bd6c" opacity="0.85"/><ellipse cx="46.5" cy="13.5" rx="1.5" ry="2.1" fill="#7a9f42" opacity="0.85"/><ellipse cx="14.2" cy="14.0" rx="2.8" ry="3.9" fill="#a4bd6c" opacity="0.85"/><ellipse cx="2.9" cy="22.5" rx="2.4" ry="3.4" fill="#8fae52" opacity="0.85"/><ellipse cx="22.6" cy="21.9" rx="2.5" ry="3.6" fill="#b5c98a" opacity="0.85"/><ellipse cx="41.7" cy="13.4" rx="1.6" ry="2.2" fill="#93b255" opacity="0.85"/><ellipse cx="52.1" cy="15.0" rx="3.1" ry="4.4" fill="#93b255" opacity="0.85"/><ellipse cx="18.8" cy="16.8" rx="2.8" ry="4.0" fill="#b5c98a" opacity="0.85"/><ellipse cx="17.6" cy="11.8" rx="1.8" ry="2.5" fill="#b5c98a" opacity="0.85"/><ellipse cx="22.0" cy="13.4" rx="2.9" ry="4.1" fill="#7a9f42" opacity="0.85"/><ellipse cx="53.9" cy="17.0" rx="1.5" ry="2.1" fill="#8fae52" opacity="0.85"/><ellipse cx="7.1" cy="23.3" rx="2.6" ry="3.7" fill="#86a94a" opacity="0.85"/><ellipse cx="48.7" cy="17.4" rx="2.2" ry="3.2" fill="#a4bd6c" opacity="0.85"/><ellipse cx="41.8" cy="22.5" rx="1.8" ry="2.5" fill="#86a94a" opacity="0.85"/><ellipse cx="11.8" cy="6.3" rx="2.5" ry="3.5" fill="#7a9f42" opacity="0.85"/><ellipse cx="6.5" cy="20.0" rx="2.8" ry="4.0" fill="#93b255" opacity="0.85"/><ellipse cx="30.8" cy="21.5" rx="1.8" ry="2.5" fill="#b5c98a" opacity="0.85"/><ellipse cx="34.1" cy="20.2" rx="2.4" ry="3.4" fill="#a4bd6c" opacity="0.85"/><ellipse cx="51.3" cy="12.2" rx="1.5" ry="2.2" fill="#b5c98a" opacity="0.85"/><ellipse cx="33.3" cy="13.3" rx="2.9" ry="4.2" fill="#8fae52" opacity="0.85"/><ellipse cx="4.5" cy="21.5" rx="3.0" ry="4.3" fill="#7a9f42" opacity="0.85"/><ellipse cx="46.9" cy="20.4" rx="1.5" ry="2.2" fill="#8fae52" opacity="0.85"/><ellipse cx="25.4" cy="7.3" rx="3.1" ry="4.4" fill="#a4bd6c" opacity="0.85"/><ellipse cx="13.1" cy="13.2" rx="3.1" ry="4.4" fill="#86a94a" opacity="0.85"/><ellipse cx="4.3" cy="22.2" rx="2.8" ry="4.0" fill="#7a9f42" opacity="0.85"/>
<path d="M0.9 31V6.4" stroke="#4f6b33" stroke-width="0.8"/><path d="M2.9 31V5.5" stroke="#4f6b33" stroke-width="0.5"/><path d="M5.0 31V13.2" stroke="#4f6b33" stroke-width="0.5"/><path d="M6.8 31V7.6" stroke="#5c7a3c" stroke-width="0.5"/><path d="M9.3 31V13.4" stroke="#4f6b33" stroke-width="0.8"/><path d="M10.8 31V12.0" stroke="#5c7a3c" stroke-width="0.5"/><path d="M13.3 31V10.3" stroke="#e8ede2" stroke-width="0.5"/><path d="M14.7 31V7.4" stroke="#f2f4ee" stroke-width="0.8"/><path d="M17.4 31V6.5" stroke="#e8ede2" stroke-width="0.5"/><path d="M18.5 31V12.2" stroke="#6b8a45" stroke-width="0.6"/><path d="M20.7 31V6.9" stroke="#e8ede2" stroke-width="0.8"/><path d="M23.0 31V8.2" stroke="#e8ede2" stroke-width="0.6"/><path d="M24.6 31V6.3" stroke="#e8ede2" stroke-width="0.5"/><path d="M27.0 31V8.6" stroke="#e8ede2" stroke-width="0.8"/><path d="M29.5 31V8.7" stroke="#e8ede2" stroke-width="0.5"/><path d="M31.1 31V6.0" stroke="#f2f4ee" stroke-width="0.5"/><path d="M32.9 31V8.4" stroke="#5c7a3c" stroke-width="0.6"/><path d="M35.4 31V9.9" stroke="#6b8a45" stroke-width="0.5"/><path d="M36.7 31V5.0" stroke="#4f6b33" stroke-width="0.8"/><path d="M38.6 31V18.1" stroke="#6b8a45" stroke-width="0.5"/><path d="M40.5 31V19.5" stroke="#e8ede2" stroke-width="0.6"/><path d="M43.2 31V14.9" stroke="#4f6b33" stroke-width="0.6"/><path d="M44.8 31V19.7" stroke="#4f6b33" stroke-width="0.6"/><path d="M47.2 31V19.7" stroke="#f2f4ee" stroke-width="0.8"/><path d="M49.4 31V12.6" stroke="#6b8a45" stroke-width="0.5"/><path d="M51.1 31V14.3" stroke="#e8ede2" stroke-width="0.6"/><path d="M52.9 31V13.3" stroke="#6b8a45" stroke-width="0.5"/><path d="M55.5 31V15.6" stroke="#e8ede2" stroke-width="0.6"/>
<rect x="0" y="24" width="56" height="8" fill="#7d9f4c" opacity="0.550"/>
<rect x="38" y="30.300" width="18" height="1.600" fill="#d9dcd6"/><rect x="12" y="31.300" width="20" height="1.200" fill="#cdd5c6"/>
<path d="M31 26c2-1.500 4-.5 5.500 2v5h-7z" fill="#6e9c3e"/>
<rect x="0" y="32.300" width="56" height="4.500" fill="#44702f"/>
<path d="M0 35.500l56-2v7L0 46z" fill="#5b9650"/>
<path d="M0 45l56-7.500V56H0z" fill="#98b53e"/>
<path d="M0 44.300l56-7.300v1.300L0 46z" fill="#4a7a32"/>
<path d="M8 50l44-7M12 54l42-7M4 47l30-5" stroke="#b3c85a" stroke-width="0.800" opacity="0.700"/>
<path d="M10 52l40-6.500" stroke="#86a532" stroke-width="0.800" opacity="0.700"/>
</g></svg></div>
<div class="av" id="av5" style="top:472.0px"><svg width="56" height="56" viewBox="0 0 56 56"><defs><filter id="b5"><feGaussianBlur stdDeviation="0.550"/></filter><filter id="b5b"><feGaussianBlur stdDeviation="2.500"/></filter>
<linearGradient id="g5" x1="0" y1="0" x2="0" y2="1"><stop offset="0" stop-color="#80b3d0"/><stop offset="0.550" stop-color="#a4bfce"/><stop offset="1" stop-color="#6d7068"/></linearGradient></defs>
<rect width="56" height="56" fill="url(#g5)"/>
<g filter="url(#b5b)"><ellipse cx="5" cy="31" rx="10" ry="3.500" fill="#5b5e50"/><ellipse cx="12" cy="52" rx="18" ry="11" fill="#4e5246"/><ellipse cx="51" cy="37" rx="9" ry="5" fill="#6a7268"/><ellipse cx="50" cy="52" rx="10" ry="8" fill="#5c6258"/><ellipse cx="10" cy="40" rx="9" ry="4" fill="#8fa3ae"/></g>
<g filter="url(#b5)">
<circle cx="38.800" cy="19.800" r="2.200" fill="#3a241e"/>
<path d="M20.500 23c-1.500-9 2.500-16.500 9.500-16.500 6.500 0 9.500 5.500 8.500 12l-1.500 5-14 2z" fill="#43281f"/>
<ellipse cx="28.300" cy="19.500" rx="6" ry="7.200" fill="#f2d0bf"/>
<path d="M21.500 17c3-4 9-5 14-1.500l-1-5-6.500-2.500-5.500 3.500z" fill="#43281f"/>
<path d="M22.500 17.500h5M29.500 17.500h5" stroke="#f4e6e6" stroke-width="0.700"/>
<circle cx="24.800" cy="18.200" r="0.600" fill="#3a241e"/><circle cx="31.200" cy="18.200" r="0.600" fill="#3a241e"/>
<path d="M24.300 22c1.500 1.500 4 1.500 5.500 0-.5 3-4.500 3.500-5.500 0z" fill="#cf463f"/>
<path d="M23.500 25.500c4-1 11-1 15 .5 5 2 7.500 10 8.500 18l-2 8H20l1-10c-2-.5-4-1-5-3 1-5 4-9 7.500-13.500z" fill="#eee2d0"/>
<path d="M22.500 25c1.500-1.500 3.700-1 4 1l-1.500 9-4 6c-2-.5-4-1.500-4.800-3 1-5 3.300-9 6.300-13z" fill="#f6eee2"/>
<path d="M26 30c3 3 9 4 14 3M24 40c4 2 11 3 20 2M30 47c4 1 9 1 13 0" stroke="#d6c8b2" stroke-width="0.800" fill="none"/>
<path d="M20 50.500c6-1.500 14-1.500 20 0l1 5.500H19z" fill="#d31f24"/>
</g></svg></div>
</div>
</body>
</html>
